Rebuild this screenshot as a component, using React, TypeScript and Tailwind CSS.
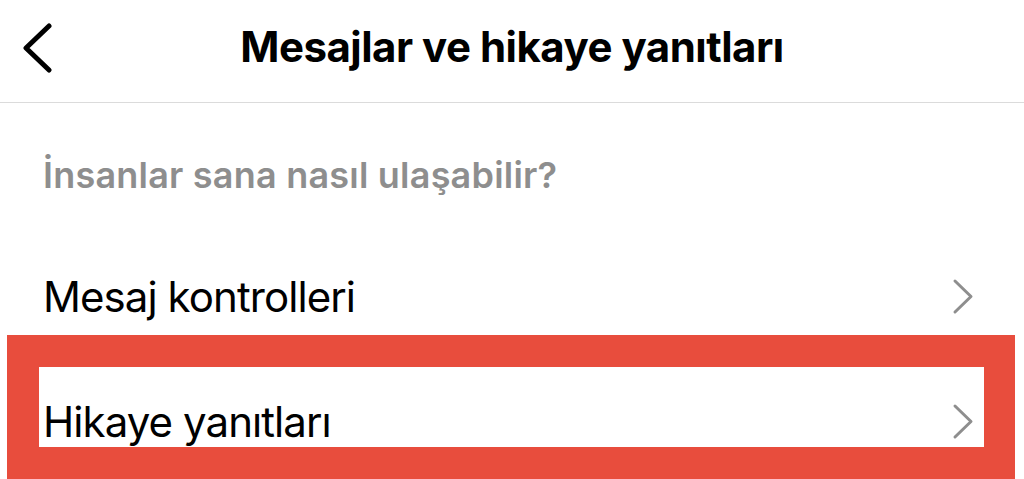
import { ReactNode } from "react"

const BackIcon = () => (
  <svg width="31" height="50" viewBox="0 0 31 50" fill="none">
    <path d="M27 3 L4 25 L27 47" stroke="#000" strokeWidth="5" strokeLinecap="round" strokeLinejoin="round" />
  </svg>
)

const ChevronRight = () => (
  <svg width="22" height="37" viewBox="0 0 22 37" fill="none">
    <path d="M3 3 L19 18.5 L3 34" stroke="#8e8e8e" strokeWidth="3" strokeLinecap="round" strokeLinejoin="round" />
  </svg>
)

const SettingsRow = ({ children }: { children: ReactNode }) => (
  <div className="flex h-[125px] items-center justify-between pl-[43px] pr-[50px]">
    <span className="text-[42px] leading-[50px] tracking-[-0.022em] text-black">{children}</span>
    <ChevronRight />
  </div>
)

export default function App() {
  return (
    <div className="relative h-[479px] overflow-hidden bg-white font-['Inter',sans-serif]">
      {/* top bar */}
      <header className="grid h-[103px] grid-cols-[1fr_auto_1fr] items-center border-b border-[#dbdbdb] pb-[8px]">
        <div className="pl-[22px] pt-[1px]">
          <BackIcon />
        </div>
        <h1 className="text-[42px] font-bold leading-[50px] tracking-[-0.012em] text-black">Mesajlar ve hikaye yanıtları</h1>
        <div />
      </header>

      <p className="mt-[47px] pl-[43px] text-[36px] font-semibold leading-[50px] tracking-[0.006em] text-[#8e8e8e]">
        İnsanlar sana nasıl ulaşabilir?
      </p>

      <div className="mt-[34px]">
        <SettingsRow>Mesaj kontrolleri</SettingsRow>
        <SettingsRow>Hikaye yanıtları</SettingsRow>
      </div>

      {/* highlight frame around the story replies row */}
      <div className="pointer-events-none absolute left-[7px] top-[335px] h-[144px] w-[1008px] border-[32px] border-r-[31px] border-[#e84d3d]" />
    </div>
  )
}
